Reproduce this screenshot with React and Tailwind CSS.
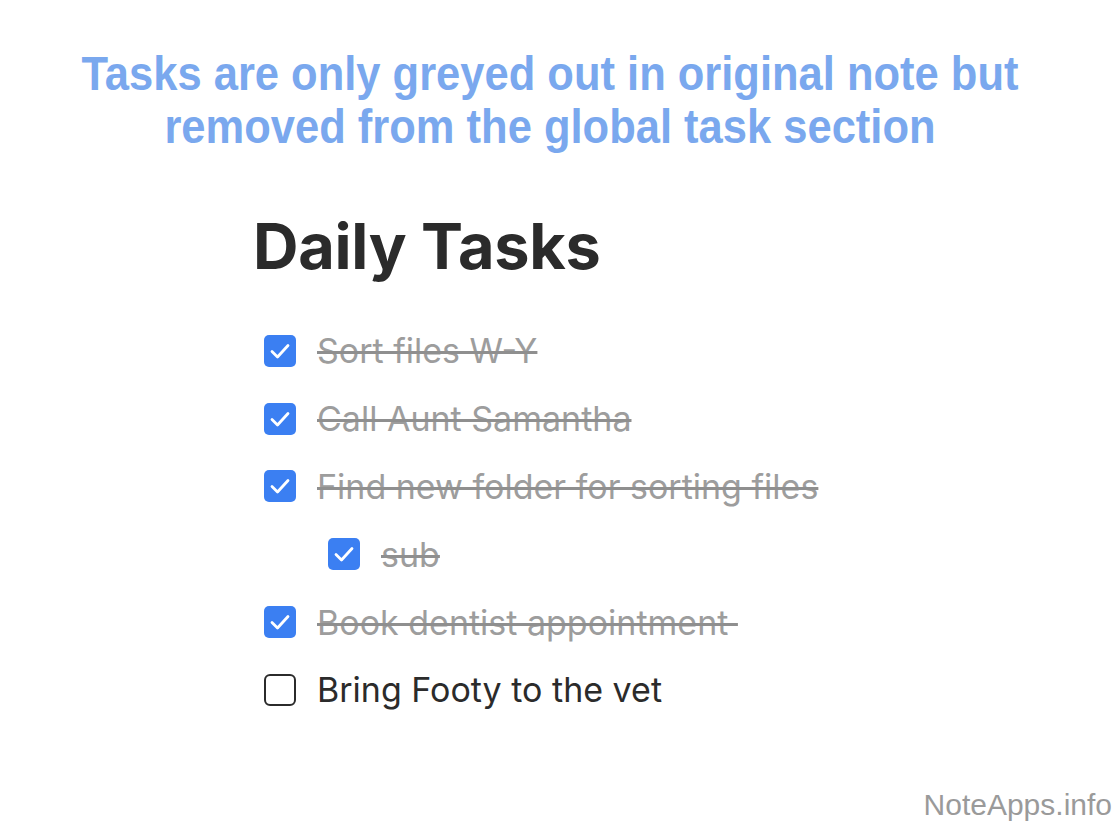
import React from "react";

const tasks = [
  { text: "Sort files W-Y", done: true, indent: false },
  { text: "Call Aunt Samantha", done: true, indent: false },
  { text: "Find new folder for sorting files", done: true, indent: false },
  { text: "sub", done: true, indent: true },
  { text: "Book dentist appointment ", done: true, indent: false },
  { text: "Bring Footy to the vet", done: false, indent: false },
];

function Box({ done }) {
  if (done) {
    return (
      <div className="w-[32px] h-[32px] rounded-[5px] bg-[#3b7ff2] shrink-0">
        <svg width="32" height="32" viewBox="0 0 32 32" fill="none">
          <path d="M8 16.5 L13.5 22 L24 10.5" stroke="white" strokeWidth="2.8" strokeLinecap="round" strokeLinejoin="round" />
        </svg>
      </div>
    );
  }
  return <div className="w-[32px] h-[32px] rounded-[6px] border-[2.5px] border-[#2b2b2b] shrink-0" />;
}

export default function App() {
  return (
    <div className="w-[1116px] h-[830px] bg-white relative overflow-hidden">
      <div
        className="pt-[48px] pr-[16px] text-center text-[#7aa8ee] font-bold text-[43.5px] leading-[53px]"
        style={{ fontFamily: '"Liberation Sans", Arial, sans-serif' }}
      >
        <div className="scale-y-110">Tasks are only greyed out in original note but</div>
        <div className="scale-y-110">removed from the global task section</div>
      </div>
      <div className="pl-[253px]" style={{ fontFamily: "Inter, sans-serif" }}>
        <div className="mt-[52px] text-[63px] font-bold text-[#2b2b2b] leading-[80px] tracking-[-0.3px]">Daily Tasks</div>
        <div className="mt-[31px] flex flex-col pl-[11px]">
          {tasks.map((t, i) => (
            <div key={i} className={`flex items-center h-[67.8px] gap-[21px] ${t.indent ? "pl-[64px]" : ""}`}>
              <Box done={t.done} />
              <span
                className={`text-[34px] whitespace-pre ${t.done ? "text-[#9d9d9d] line-through decoration-[#8f8f8f] decoration-[2.5px]" : "text-[#2b2b2b]"}`}
              >
                {t.text}
              </span>
            </div>
          ))}
        </div>
      </div>
      <div
        className="absolute right-[4px] bottom-[3px] text-[30px] text-[#9a9a9a]"
        style={{ fontFamily: '"Liberation Sans", Arial, sans-serif' }}
      >
        NoteApps.info
      </div>
    </div>
  );
}
